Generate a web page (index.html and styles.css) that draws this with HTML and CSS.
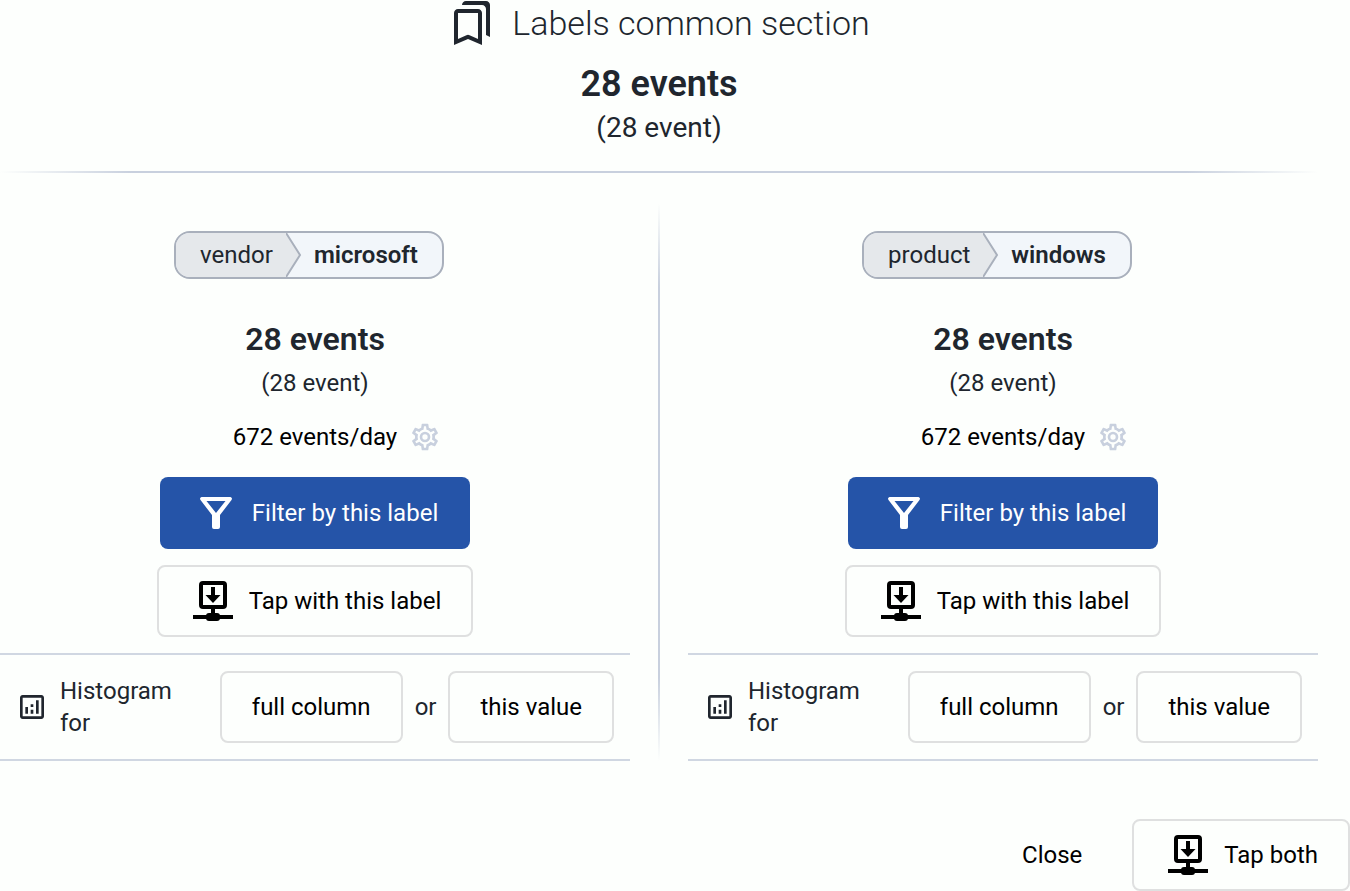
FILE: index.html
```html
<!DOCTYPE html>
<html lang="en">
<head>
    <meta charset="UTF-8">
    <meta name="viewport" content="width=device-width, initial-scale=1.0">
    <title>Labels common section</title>
    <link rel="stylesheet" href="styles.css">
</head>
<body>

    <!-- Shared icons -->
    <svg class="icon-defs" aria-hidden="true">
        <symbol id="iconGear" viewBox="0 0 24 24">
            <path d="M12,8A4,4 0 0,1 16,12A4,4 0 0,1 12,16A4,4 0 0,1 8,12A4,4 0 0,1 12,8M12,10A2,2 0 0,0 10,12A2,2 0 0,0 12,14A2,2 0 0,0 14,12A2,2 0 0,0 12,10M10,22C9.75,22 9.54,21.82 9.5,21.58L9.13,18.93C8.5,18.68 7.96,18.34 7.44,17.94L4.95,18.95C4.73,19.03 4.46,18.95 4.34,18.73L2.34,15.27C2.21,15.05 2.27,14.78 2.46,14.63L4.57,12.97L4.5,12L4.57,11L2.46,9.37C2.27,9.22 2.21,8.95 2.34,8.73L4.34,5.27C4.46,5.05 4.73,4.96 4.95,5.05L7.44,6.05C7.96,5.66 8.5,5.32 9.13,5.07L9.5,2.42C9.54,2.18 9.75,2 10,2H14C14.25,2 14.46,2.18 14.5,2.42L14.87,5.07C15.5,5.32 16.04,5.66 16.56,6.05L19.05,5.05C19.27,4.96 19.54,5.05 19.66,5.27L21.66,8.73C21.79,8.95 21.73,9.22 21.54,9.37L19.43,11L19.5,12L19.43,13L21.54,14.63C21.73,14.78 21.79,15.05 21.66,15.27L19.66,18.73C19.54,18.95 19.27,19.04 19.05,18.95L16.56,17.95C16.04,18.34 15.5,18.68 14.87,18.93L14.5,21.58C14.46,21.82 14.25,22 14,22H10M11.25,4L10.88,6.61C9.68,6.86 8.62,7.5 7.85,8.39L5.44,7.35L4.69,8.65L6.8,10.2C6.4,11.37 6.4,12.64 6.8,13.8L4.68,15.36L5.43,16.66L7.86,15.62C8.63,16.5 9.68,17.14 10.87,17.38L11.24,20H12.76L13.13,17.39C14.32,17.14 15.37,16.5 16.14,15.62L18.57,16.66L19.32,15.36L17.2,13.81C17.6,12.64 17.6,11.37 17.2,10.2L19.31,8.65L18.56,7.35L16.15,8.39C15.38,7.5 14.32,6.86 13.12,6.62L12.75,4H11.25Z"/>
        </symbol>
        <symbol id="iconFilter" viewBox="0 0 32 32">
            <path fill-rule="evenodd" d="M1.500 0H30.500Q32.800 .8 31.500 3L20 18V30Q20 32 18 32H14Q12 32 12 30V18L.5 3Q-.8 .8 1.500 0ZM6.500 4L16 16L25.500 4Z"/>
        </symbol>
        <symbol id="iconTap" viewBox="0 0 40 40">
            <rect x="8" y="2" width="24" height="24" rx="2" fill="none" stroke="currentColor" stroke-width="4"/>
            <path d="M18 6h4v8h5.500L20 22l-7.500-8H18zM18 28h4v5h-4zM0 34h40v4H0z"/>
            <rect x="13" y="32" width="14" height="8" rx="3"/>
        </symbol>
        <symbol id="iconHistogram" viewBox="0 0 24 24">
            <path d="M19 3H5c-1.1 0-2 .9-2 2v14c0 1.1.9 2 2 2h14c1.1 0 2-.9 2-2V5c0-1.1-.9-2-2-2zm0 16H5V5h14v14zM7 12h2v5H7zm8-5h2v10h-2zm-4 7h2v3h-2zm0-4h2v2h-2z"/>
        </symbol>
    </svg>

    <main>
        <!-- Common section -->
        <header>
            <h1>
                <svg class="icon-title" viewBox="0 0 24 24" aria-hidden="true"><path d="M15 7v12.97l-4.210-1.810-.79-.34-.79.34L5 19.970V7h10m4-6H8.990C7.890 1 7 1.900 7 3h10c1.100 0 2 .9 2 2v13l2 1V3c0-1.100-.9-2-2-2zm-4 4H5c-1.100 0-2 .9-2 2v16l7-3 7 3V7c0-1.100-.9-2-2-2z"/></svg>
                Labels common section
            </h1>
            <p class="total">28 events</p>
            <p class="total-detail">(28 event)</p>
        </header>
        <hr>

        <!-- Label columns -->
        <div class="columns">
            <section>
                <div class="label">
                    <span class="label-key">vendor</span>
                    <svg class="label-arrow" viewBox="0 0 16 44" aria-hidden="true"><path class="arrow-fill" d="M0 0L14 22L0 44z"/><path class="arrow-line" d="M0 0L14 22L0 44"/></svg>
                    <strong class="label-value">microsoft</strong>
                </div>
                <h2>28 events</h2>
                <p class="detail">(28 event)</p>
                <div class="rate">
                    672 events/day
                    <button class="gear" aria-label="Rate settings"><svg class="icon" aria-hidden="true"><use href="#iconGear"/></svg></button>
                </div>
                <button class="btn btn-primary"><svg class="icon" aria-hidden="true"><use href="#iconFilter"/></svg>Filter by this label</button>
                <button class="btn btn-tap"><svg class="icon-tap" aria-hidden="true"><use href="#iconTap"/></svg>Tap with this label</button>
                <div class="histogram">
                    <svg class="icon" aria-hidden="true"><use href="#iconHistogram"/></svg>
                    <span>Histogram for</span>
                    <button class="btn">full column</button>
                    <span>or</span>
                    <button class="btn">this value</button>
                </div>
            </section>

            <div class="divider"></div>

            <section>
                <div class="label">
                    <span class="label-key">product</span>
                    <svg class="label-arrow" viewBox="0 0 16 44" aria-hidden="true"><path class="arrow-fill" d="M0 0L14 22L0 44z"/><path class="arrow-line" d="M0 0L14 22L0 44"/></svg>
                    <strong class="label-value">windows</strong>
                </div>
                <h2>28 events</h2>
                <p class="detail">(28 event)</p>
                <div class="rate">
                    672 events/day
                    <button class="gear" aria-label="Rate settings"><svg class="icon" aria-hidden="true"><use href="#iconGear"/></svg></button>
                </div>
                <button class="btn btn-primary"><svg class="icon" aria-hidden="true"><use href="#iconFilter"/></svg>Filter by this label</button>
                <button class="btn btn-tap"><svg class="icon-tap" aria-hidden="true"><use href="#iconTap"/></svg>Tap with this label</button>
                <div class="histogram">
                    <svg class="icon" aria-hidden="true"><use href="#iconHistogram"/></svg>
                    <span>Histogram for</span>
                    <button class="btn">full column</button>
                    <span>or</span>
                    <button class="btn">this value</button>
                </div>
            </section>
        </div>
    </main>

    <!-- Actions -->
    <footer>
        <button class="btn btn-plain">Close</button>
        <button class="btn btn-tap"><svg class="icon-tap" aria-hidden="true"><use href="#iconTap"/></svg>Tap both</button>
    </footer>

</body>
</html>
```
FILE: styles.css
```css
* {
    box-sizing: border-box;
}
body {
    margin: 0;
    font-family: Roboto, "Liberation Sans", sans-serif;
    font-size: 24px;
    line-height: 32px;
    color: #20262e;
    background-color: #fdfffd;
}
h1, h2, p {
    margin: 0;
}
svg {
    display: block;
    flex: none;
    fill: currentColor;
}
.icon-defs {
    position: absolute;
    width: 0;
    height: 0;
}
.icon {
    width: 32px;
    height: 32px;
}
.icon-title {
    width: 48px;
    height: 48px;
}
.icon-tap {
    width: 40px;
    height: 40px;
}
main {
    padding-right: 32px;
}
header {
    text-align: center;
}
h1 {
    display: flex;
    justify-content: center;
    align-items: center;
    gap: 16px;
    height: 46px;
    font-size: 34px;
    font-weight: 300;
}
.total {
    margin-top: 16px;
    font-size: 36px;
    line-height: 44px;
    font-weight: 600;
}
.total-detail {
    margin-top: 4px;
    font-size: 28px;
    line-height: 36px;
}
hr {
    height: 2px;
    margin: 25px 0 30px;
    border: none;
    background: linear-gradient(to right, transparent, #c8d0de 10%, #c8d0de 90%, transparent);
}
.columns {
    display: grid;
    grid-template-columns: 1fr 2px 1fr;
    gap: 28px;
}
.divider {
    background: linear-gradient(to bottom, transparent, #c8d0de 15%, #c8d0de 85%, transparent);
}
section {
    display: flex;
    flex-direction: column;
    align-items: center;
    padding-top: 28px;
}
.label {
    display: flex;
    align-items: center;
    height: 48px;
    margin-right: 12px;
    border: 2px solid #a9b0bc;
    border-radius: 16px;
    background-color: #f2f6fa;
    overflow: hidden;
}
.label-key {
    padding: 6px 13px 6px 24px;
    background-color: #e5e8eb;
}
.label-value {
    padding: 0 24px 0 12px;
    font-weight: 600;
}
.label-arrow {
    width: 16px;
    height: 44px;
}
.arrow-fill {
    fill: #e5e8eb;
}
.arrow-line {
    fill: none;
    stroke: #a9b0bc;
    stroke-width: 2;
}
h2 {
    margin-top: 40px;
    font-size: 32px;
    line-height: 40px;
    font-weight: 600;
}
.detail {
    margin-top: 8px;
}
.rate {
    display: flex;
    align-items: center;
    gap: 12px;
    margin: 22px 0 24px;
    padding-left: 44px;
    color: #000;
}
.gear {
    padding: 0;
    border: none;
    background: none;
    color: #c8d0de;
    cursor: pointer;
}
.btn {
    display: flex;
    align-items: center;
    height: 72px;
    padding: 0 30px;
    border: 2px solid #dfe0e0;
    border-radius: 8px;
    background: none;
    color: #000;
    font: inherit;
    white-space: nowrap;
    cursor: pointer;
}
.btn-primary {
    gap: 20px;
    padding: 0 32px 0 40px;
    border: none;
    background-color: #2554a8;
    color: #fff;
}
.btn-tap {
    gap: 16px;
    padding-left: 34px;
}
.btn-plain {
    border-color: transparent;
}
section .btn-tap {
    margin: 16px 0;
}
.histogram {
    display: flex;
    align-items: center;
    gap: 12px;
    width: 100%;
    padding: 16px;
    border: solid #d0d7e2;
    border-width: 2px 0;
}
footer {
    display: flex;
    justify-content: flex-end;
    gap: 18px;
    margin-top: 58px;
}
```
